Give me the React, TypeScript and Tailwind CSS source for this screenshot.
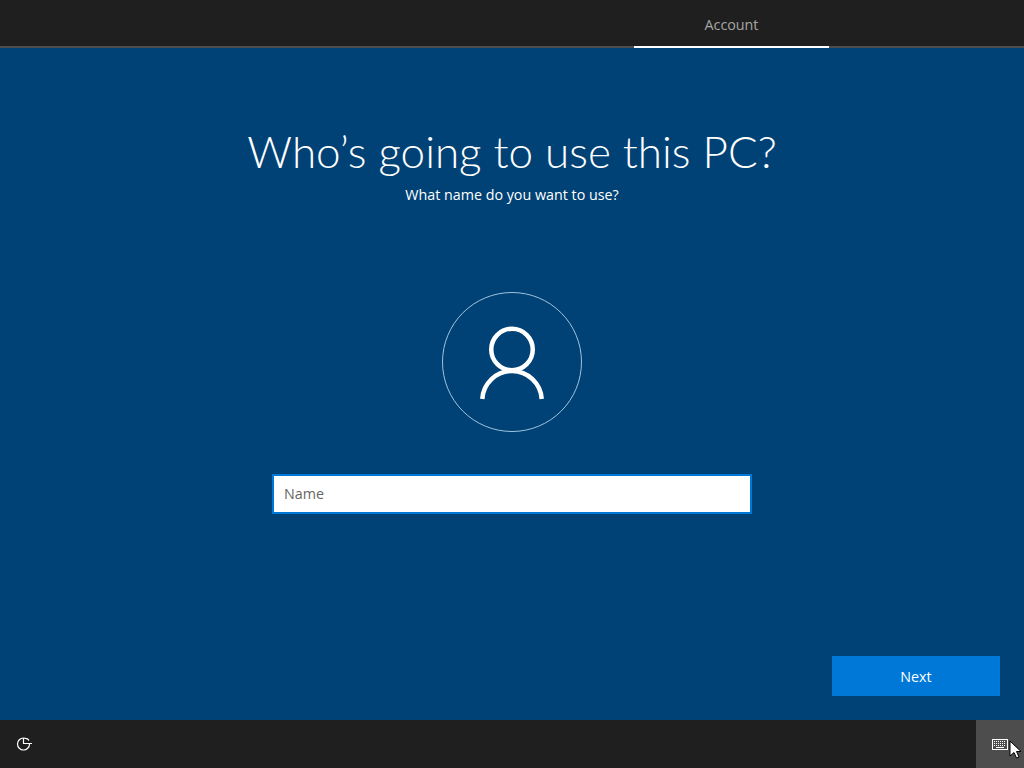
export default function App() {
  return (
    <div className="w-[1024px] h-[768px] flex flex-col overflow-hidden bg-[#004275] text-white font-['Open_Sans','Noto_Sans',sans-serif]">
      <header className="h-[48px] shrink-0 bg-[#1f1f1f] border-b-2 border-[#4d4d4d] flex justify-end pr-[195px]">
        <div className="w-[195px] h-[48px] border-b-2 border-white flex items-center justify-center text-[14.3px] text-[#a6a6a6] pt-[3px]">Account</div>
      </header>
      <main className="flex-1 flex flex-col items-center relative">
        <h1 className="mt-[71px] text-[44px] leading-[64px] font-light font-['Lato',sans-serif]">Who’s going to use this PC?</h1>
        <p className="text-[14.3px] leading-[20px] mt-[2px]">What name do you want to use?</p>
        <div className="mt-[87px] w-[140px] h-[140px] rounded-full border border-[#9fc4e0] flex items-center justify-center">
          <svg className="mt-[2px]" width="66" height="74" viewBox="0 0 66 74" fill="none" stroke="white" strokeWidth="4.5">
            <circle cx="33" cy="23.5" r="20.75" />
            <path d="M3.3 73A29.75 29.75 0 0 1 62.7 73" />
          </svg>
        </div>
        <div className="mt-[42px] w-[480px] h-[40px] bg-white border-2 border-[#0078d7] flex items-center px-[10px] pb-[1px] text-[14.3px] text-[#666666]">Name</div>
        <div className="flex-1 w-full flex items-end justify-end pr-[24px] pb-[24px]">
          <button className="w-[168px] h-[40px] bg-[#0078d7] text-[14.3px] text-white pt-[1px]">Next</button>
        </div>
      </main>
      <footer className="h-[48px] shrink-0 bg-[#1f1f1f] flex items-center justify-between">
        <div className="pl-[15px] flex items-center">
          <svg width="18" height="18" viewBox="0 0 18 18" fill="none" stroke="white" strokeWidth="1.2">
            <path d="M8.500 3A6 6 0 1 0 14.500 9" />
            <path d="M8.500 3V8.500H17" />
            <path d="M8.500 3L12.500 3.800L14 5.500" />
          </svg>
        </div>
        <div className="w-[48px] h-[48px] bg-[#4d4d4d] flex items-center justify-center relative">
          <svg width="16" height="11" viewBox="0 0 16 11" fill="none" stroke="white" strokeWidth="1">
            <rect x="0.5" y="0.5" width="15" height="10" />
            <path d="M2 2.500h12M2 4.500h12M2 6.500h12" strokeDasharray="1 1" />
            <path d="M4 8.500h8" />
          </svg>
          <svg className="absolute left-[33px] top-[20px]" width="12" height="19" viewBox="0 0 12 19">
            <path d="M1 1v15l4-3.500 2.500 5.500 2.500-1-2.500-5.500h4.500z" fill="white" stroke="black" strokeWidth="1" />
          </svg>
        </div>
      </footer>
    </div>
  );
}
